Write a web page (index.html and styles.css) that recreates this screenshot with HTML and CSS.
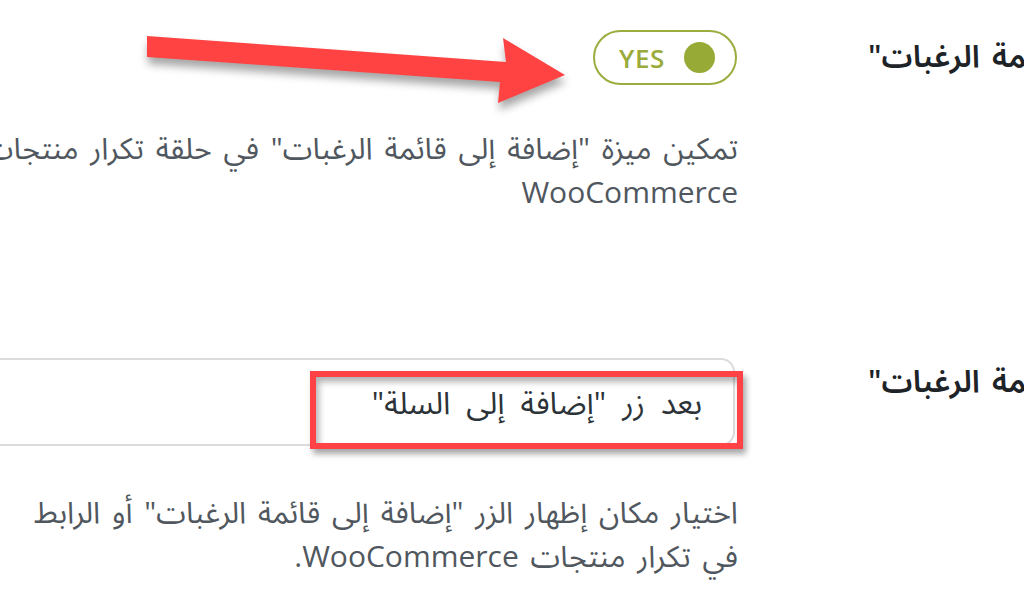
FILE: index.html
```html
<!DOCTYPE html>
<html lang="ar" dir="rtl">

<head>
    <meta charset="UTF-8">
    <meta name="viewport" content="width=device-width, initial-scale=1.0">
    <title>إعدادات قائمة الرغبات</title>
    <link rel="stylesheet" href="styles.css">
</head>

<body>
    <div class="page">
        <div class="form-table">
            <div class="row row-first">
                <div class="label">تمكين "إضافة إلى قائمة الرغبات"</div>
                <div class="field">
                    <div class="toggle">
                        <span class="toggle-text">YES</span>
                        <span class="knob"></span>
                    </div>
                    <p class="description">تمكين ميزة "إضافة إلى قائمة الرغبات" في حلقة تكرار منتجات WooCommerce</p>
                </div>
            </div>

            <div class="row row-second">
                <div class="label">موضع "إضافة إلى قائمة الرغبات"</div>
                <div class="field">
                    <div class="select-wrap">
                        <div class="select">بعد زر "إضافة إلى السلة"</div>
                        <span class="highlight"></span>
                    </div>
                    <p class="description">اختيار مكان إظهار الزر "إضافة إلى قائمة الرغبات" أو الرابط<br>في تكرار منتجات WooCommerce.</p>
                </div>
            </div>
        </div>

        <!-- annotation arrow pointing at the toggle -->
        <svg class="arrow" width="600" height="120" viewBox="0 0 600 120">
            <polygon points="147,36 506,62 503,38 565,75 498,103 500,82 147,57" fill="#ff4343" />
        </svg>
    </div>
</body>

</html>
```

FILE: styles.css
```css
html,
body {
    margin: 0;
    padding: 0;
    background: #fff;
    overflow: hidden;
}

body {
    font-family: "Open Sans", "Noto Sans Arabic", "DejaVu Sans", sans-serif;
    font-size: 30px;
    line-height: 44px;
    color: #50575e;
    word-spacing: 4px;
}

.page {
    position: relative;
    width: 1024px;
    height: 615px;
}

.form-table {
    width: 1402px;
    margin-right: -344px;
}

.row {
    display: grid;
    grid-template-columns: 500px 772px;
    column-gap: 130px;
}

.row-first {
    padding-top: 30px;
    padding-bottom: 72px;
}

.row-second {
    padding-top: 72px;
}

.label {
    color: #1d2327;
    font-size: 31px;
    font-weight: 600;
    text-align: left;
    white-space: nowrap;
    padding-top: 3px;
}

.row-second .label {
    padding-top: 0;
}

.toggle {
    direction: ltr;
    display: flex;
    align-items: center;
    gap: 19px;
    width: 144px;
    height: 55px;
    box-sizing: border-box;
    border: 2px solid #9cad3f;
    border-radius: 28px;
    padding: 0 17px 0 24px;
    margin-left: auto;
    margin-right: 1px;
}

.toggle-text {
    font-size: 26px;
    font-weight: 600;
    color: #9aab3b;
    letter-spacing: 0.5px;
}

.knob {
    width: 31px;
    height: 31px;
    border-radius: 50%;
    background: #97aa35;
}

.description {
    margin: 41px 0 0;
}

.row-second .description {
    margin-top: 44px;
}

.select-wrap {
    position: relative;
}

.select {
    height: 88px;
    box-sizing: border-box;
    border: 2px solid #dcdcde;
    border-radius: 0 14px 14px 0;
    padding: 0 31px 0 0;
    margin-right: 3px;
    display: flex;
    align-items: center;
    font-size: 31px;
    word-spacing: 8px;
    color: #2c3338;
}

.highlight {
    position: absolute;
    top: 13px;
    right: -5px;
    width: 433px;
    height: 78px;
    box-sizing: border-box;
    border: 6px solid #ff4245;
    box-shadow: 3px 5px 6px rgba(0, 0, 0, 0.35), inset 3px 5px 6px rgba(0, 0, 0, 0.3);
}

.arrow {
    position: absolute;
    left: 0;
    top: 0;
    filter: drop-shadow(1px 7px 4px rgba(0, 0, 0, 0.35));
}
```
